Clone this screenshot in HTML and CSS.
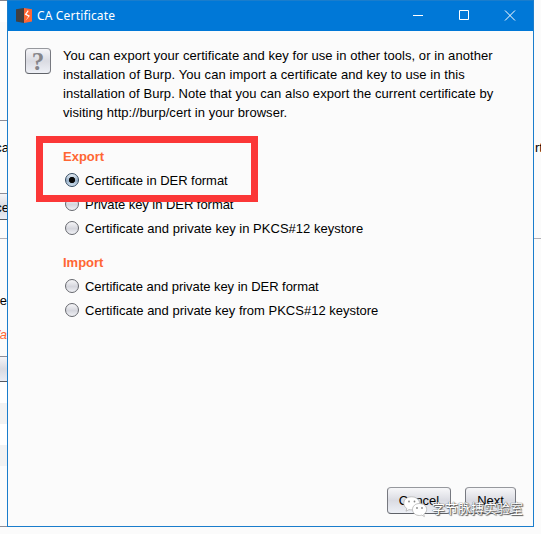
FILE: index.html
```
<!DOCTYPE html>
<html lang="en">
<head>
<meta charset="utf-8">
<title>CA Certificate</title>
<link rel="stylesheet" href="styles.css">
</head>
<body>
<div class="desktop">
  <aside class="behind behind-left">
    <div class="blank-top"></div>
    <div class="panel"><span>ca</span></div>
    <div class="button-slice"><span>ce</span></div>
    <div class="gap-rule"></div>
    <div class="label"><span>e</span></div>
    <div class="notice"><span>Wa</span></div>
    <div class="button-slice second"></div>
    <div class="stripes"><i></i><i></i><i></i><i></i></div>
    <div class="tail"></div>
  </aside>
  <main class="dialog">
    <header class="titlebar">
      <svg class="logo" width="16" height="15" viewBox="0 0 16 15"><path fill="#414042" d="M0 1.3 8 0v15L0 13.6z"/><path fill="#ff6633" d="m8 0 8 1.3v12.3L8 15z"/><path fill="#fff" d="m12 2-3.300 4.400 3.600 2-2.800 4.300 4.500-4.900-3.500-1.900 2-2.300z"/></svg>
      <h1>CA Certificate</h1>
      <div class="controls">
        <svg width="12" height="12" viewBox="0 0 12 12"><path d="M1 5.500h10"/></svg>
        <svg width="12" height="12" viewBox="0 0 12 12"><path d="M1.500 .500h9v9h-9z"/></svg>
        <svg width="12" height="12" viewBox="0 0 12 12"><path d="m1 .500 10 10M11 .500 1 10.500"/></svg>
      </div>
    </header>
    <section class="intro">
      <div class="help">?</div>
      <p><span class="l1">You can export your certificate and key for use in other tools, or in another</span><span class="l2">installation of Burp. You can import a certificate and key to use in this</span><span class="l3">installation of Burp. Note that you can also export the current certificate by</span><span class="l4">visiting http://burp/cert in your browser.</span></p>
    </section>
    <section class="options">
      <h2>Export</h2>
      <div class="option"><i class="radio selected"></i><span class="der">Certificate in DER format</span></div>
      <div class="option"><i class="radio"></i><span class="der">Private key in DER format</span></div>
      <div class="option"><i class="radio"></i><span class="store">Certificate and private key in PKCS#12 keystore</span></div>
      <h2 class="import">Import</h2>
      <div class="option"><i class="radio"></i><span class="der">Certificate and private key in DER format</span></div>
      <div class="option"><i class="radio"></i><span>Certificate and private key from PKCS#12 keystore</span></div>
      <div class="highlight"></div>
    </section>
    <footer class="actions">
      <div class="btn cancel">Cancel</div>
      <div class="btn next">Next</div>
      <div class="watermark">
        <svg width="25" height="22" viewBox="0 0 25 22"><g fill="#fff" stroke="#aaa" stroke-width=".7"><path d="M8.500.8C4 .8.8 3.600.8 7.300c0 2.200 1.100 4 3 5.200L3 15.200l3-1.600c4.800 1.200 10-1.500 10.500-6C16.800 3.700 13 .8 8.500.8z"/><path d="M16.500 7.500c-4 0-7 2.500-7 6s3 6 7 6c.8 0 1.600-.1 2.300-.4l2.600 1.500-.6-2.400c1.800-1.200 2.900-2.800 2.900-4.700 0-3.500-3.200-6-7.200-6z"/></g><g fill="#888"><circle cx="6" cy="5.500" r=".9"/><circle cx="11.500" cy="5.500" r=".9"/><circle cx="14" cy="12" r=".9"/><circle cx="19" cy="12" r=".9"/></g></svg>
        <span>字节脉搏实验室</span>
      </div>
    </footer>
  </main>
  <aside class="behind behind-right">
    <div class="panel-right"><span>rt</span></div>
  </aside>
</div>
</body>
</html>
```
FILE: styles.css
```
* { box-sizing: border-box; }
body {
  margin: 0;
  background: #fbfbfb;
  font: 13px/19px "Liberation Sans", Arial, sans-serif;
  color: #000;
  overflow: hidden;
}
.desktop {
  display: grid;
  grid-template-columns: 7px 527px 7px;
  height: 534px;
}
.behind { overflow: hidden; white-space: nowrap; }
.behind-left > div { display: flex; justify-content: flex-end; overflow: hidden; }
.behind-left > .panel, .behind-left > .button-slice { margin-right: -2px; }
.blank-top { height: 22px; background: #fff; border-top: 1px solid #85858f; }
.panel {
  height: 171px;
  padding-top: 116px;
  background: linear-gradient(#8d8d97, #8d8d97) 0 98px / 100% 1px no-repeat;
}
.button-slice {
  height: 27px;
  padding-top: 4px;
  border-top: 1px solid #8d8d97;
  border-bottom: 1px solid #555a62;
  background: linear-gradient(#f5f5f8, #d9dae1 50%, #e9ecf4);
}
.gap-rule { height: 19px; border-bottom: 1px solid #b0b0b7; }
.label { height: 86px; padding-top: 52px; }
.notice { height: 31px; color: #ff6633; font-style: italic; }
.button-slice.second { height: 26px; }
.behind-left > .stripes { height: 84px; flex-direction: column; justify-content: flex-start; }
.stripes i { height: 21px; background: #fff; }
.stripes i:nth-child(even) { background: #f2f2f2; }
.tail { height: 61px; border-bottom: 1px solid #8d8d97; }
.panel-right { height: 239px; padding: 138px 0 0 1px; border-bottom: 1px solid #b0b0b7; }

.dialog {
  height: 527px;
  border: 1px solid #1a7dcc;
  border-top: 0;
  display: flex;
  flex-direction: column;
  background: #fbfbfb;
}
.titlebar {
  height: 31px;
  flex: none;
  display: flex;
  align-items: center;
  padding: 0 17px 0 8px;
  background: #0078d7;
  border-top: 1px solid #1a7dcc;
  color: #fff;
}
.titlebar .logo { margin-top: -1px; }
.titlebar h1 {
  margin: 0 0 0 5px;
  font: 12px/16px "Noto Sans", "Open Sans", sans-serif;
  letter-spacing: .16px;
}
.controls { display: flex; gap: 34px; margin-left: auto; }
.controls svg { fill: none; stroke: #fff; stroke-width: 1; }
.intro { display: flex; align-items: flex-start; padding: 15px 0 0 17px; }
.help {
  width: 26px;
  height: 26px;
  margin-top: 2px;
  border: 1px solid;
  border-color: #96989d #777980 #5f6268;
  border-radius: 4px;
  background: linear-gradient(#f5f5f8, #dadbe2 50%, #eef0f6);
  font: bold 25px/25px "Liberation Serif", serif;
  text-align: center;
  color: #85858a;
}
.intro p { margin: 0 0 0 12px; }
.intro p span { display: block; white-space: nowrap; width: max-content; }
.l1 { letter-spacing: .058px; }
.l2 { letter-spacing: .08px; }
.l3 { letter-spacing: .06px; }
.l4 { letter-spacing: .04px; }
.options { position: relative; padding: 25px 0 0 55px; }
.options h2 { margin: 0; height: 21px; font: bold 13px/20px "Liberation Sans", Arial, sans-serif; color: #ff6633; }
.options h2.import { margin-top: 13px; }
.option { height: 24px; display: flex; align-items: center; gap: 6px; padding-left: 2px; white-space: nowrap; }
.der { letter-spacing: -.045px; }
.store { letter-spacing: .015px; }
.radio {
  width: 14px;
  height: 14px;
  border-radius: 50%;
  border: 1px solid #66686e;
  background: linear-gradient(#f6f6f8, #d5d6dd 55%, #f0f1f5);
}
.radio.selected {
  border-color: #334a60;
  background: radial-gradient(circle, #080808 0 2.800px, transparent 3.400px), linear-gradient(#e5edf5, #99b0c7 55%, #cfe0f0);
}
.highlight {
  position: absolute;
  left: 28px;
  top: 14px;
  width: 222px;
  height: 66px;
  border: 7px solid #fb3737;
}
.actions { position: relative; display: flex; gap: 14px; margin-top: auto; padding: 0 17px 12px 379px; }
.btn {
  height: 27px;
  border: 1px solid;
  border-color: #96989d #777980 #5f6268;
  border-radius: 4px;
  background: linear-gradient(#f7f7f9, #dadbe2 50%, #edf0f6);
  line-height: 26px;
  text-align: center;
}
.cancel { width: 64px; }
.next { width: 51px; }
.watermark { position: absolute; left: 395px; top: 9px; display: flex; white-space: nowrap; }
.watermark span {
  margin-left: 4px;
  font: 13px/24px "Noto Sans CJK SC", sans-serif;
  color: #fff;
  text-shadow: 1px 1px 1px #555, 0 0 1px #666, 0 0 1px #666;
}
```
